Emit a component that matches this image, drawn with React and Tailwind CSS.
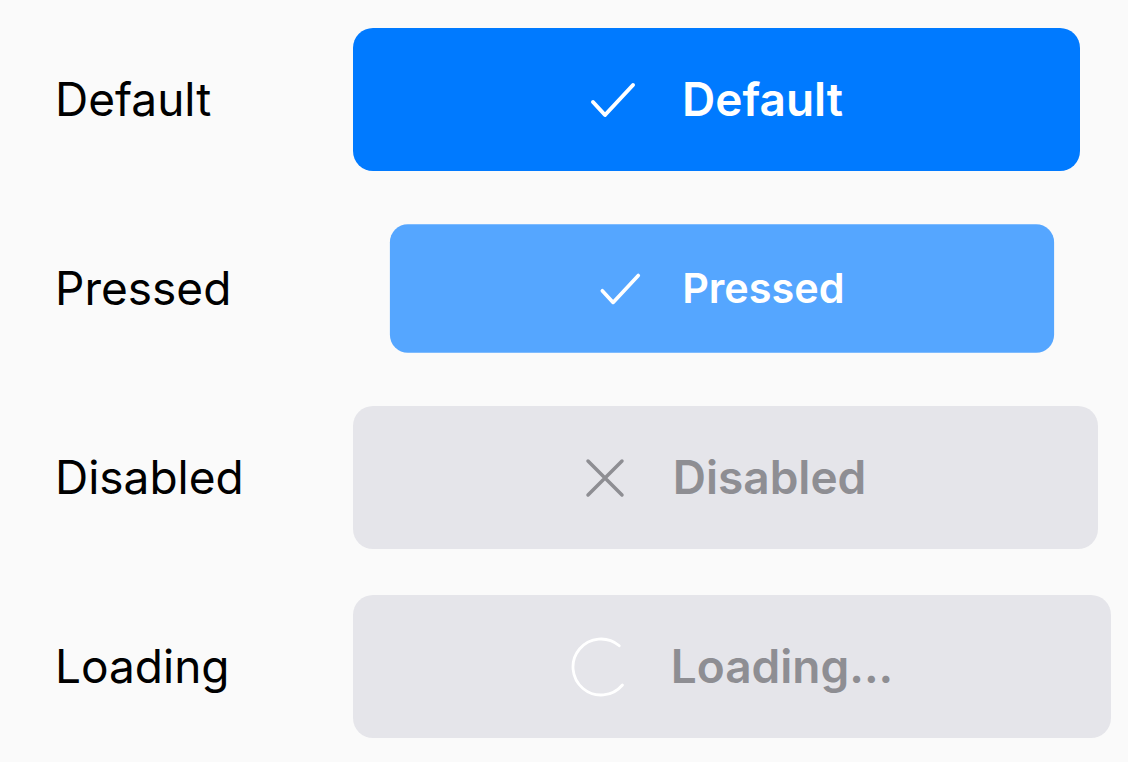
import React from 'react';

function CheckIcon({ className }) {
    return (
        <svg viewBox="0 0 46 36" className={className} fill="none" stroke="currentColor" strokeWidth="4" strokeLinecap="round" strokeLinejoin="round">
            <path d="M3 20 L15 33 L43 3" />
        </svg>
    );
}

function XIcon({ className }) {
    return (
        <svg viewBox="0 0 40 40" className={className} fill="none" stroke="currentColor" strokeWidth="3.5" strokeLinecap="round">
            <path d="M3 3 L37 37 M37 3 L3 37" />
        </svg>
    );
}

function Spinner({ className }) {
    // open ring, gap on the right
    return (
        <svg viewBox="0 0 60 60" className={className} fill="none">
            <circle cx="30" cy="30" r="28" stroke="#ffffff" strokeWidth="2.8" strokeLinecap="round"
                strokeDasharray="132 200" transform="rotate(40 30 30)" />
        </svg>
    );
}

export default function App() {
    return (
        <div className="min-h-screen w-full bg-[#fafafa] pt-[28px] pl-[55px]" style={{ fontFamily: 'Inter, "Noto Sans", sans-serif' }}>
            <div className="flex flex-col gap-[46px]">
                <div className="flex items-center h-[143px]">
                    <div className="w-[298px] text-[46px] text-black">Default</div>
                    <div className="w-[727px] h-[143px] rounded-[20px] bg-[#007aff] flex items-center justify-center gap-[46px] text-white">
                        <CheckIcon className="w-[46px] h-[36px]" />
                        <span className="text-[46px] font-semibold">Default</span>
                    </div>
                </div>

                <div className="flex items-center h-[143px]">
                    <div className="w-[298px] text-[46px] text-black">Pressed</div>
                    <div className="w-[738px] h-[143px] rounded-[20px] bg-[#55a6ff] flex items-center justify-center gap-[46px] text-white scale-90">
                        <CheckIcon className="w-[46px] h-[36px]" />
                        <span className="text-[46px] font-semibold">Pressed</span>
                    </div>
                </div>

                <div className="flex items-center h-[143px]">
                    <div className="w-[298px] text-[46px] text-black">Disabled</div>
                    <div className="w-[745px] h-[143px] rounded-[20px] bg-[#e5e5ea] flex items-center justify-center gap-[48px] text-[#8e8e93]">
                        <XIcon className="w-[40px] h-[40px]" />
                        <span className="text-[46px] font-semibold">Disabled</span>
                    </div>
                </div>

                <div className="flex items-center h-[143px]">
                    <div className="w-[298px] text-[46px] text-black">Loading</div>
                    <div className="w-[758px] h-[143px] rounded-[20px] bg-[#e5e5ea] flex items-center justify-center gap-[40px] text-[#8e8e93]">
                        <Spinner className="w-[60px] h-[60px]" />
                        <span className="text-[46px] font-semibold">Loading...</span>
                    </div>
                </div>
            </div>
        </div>
    );
}
